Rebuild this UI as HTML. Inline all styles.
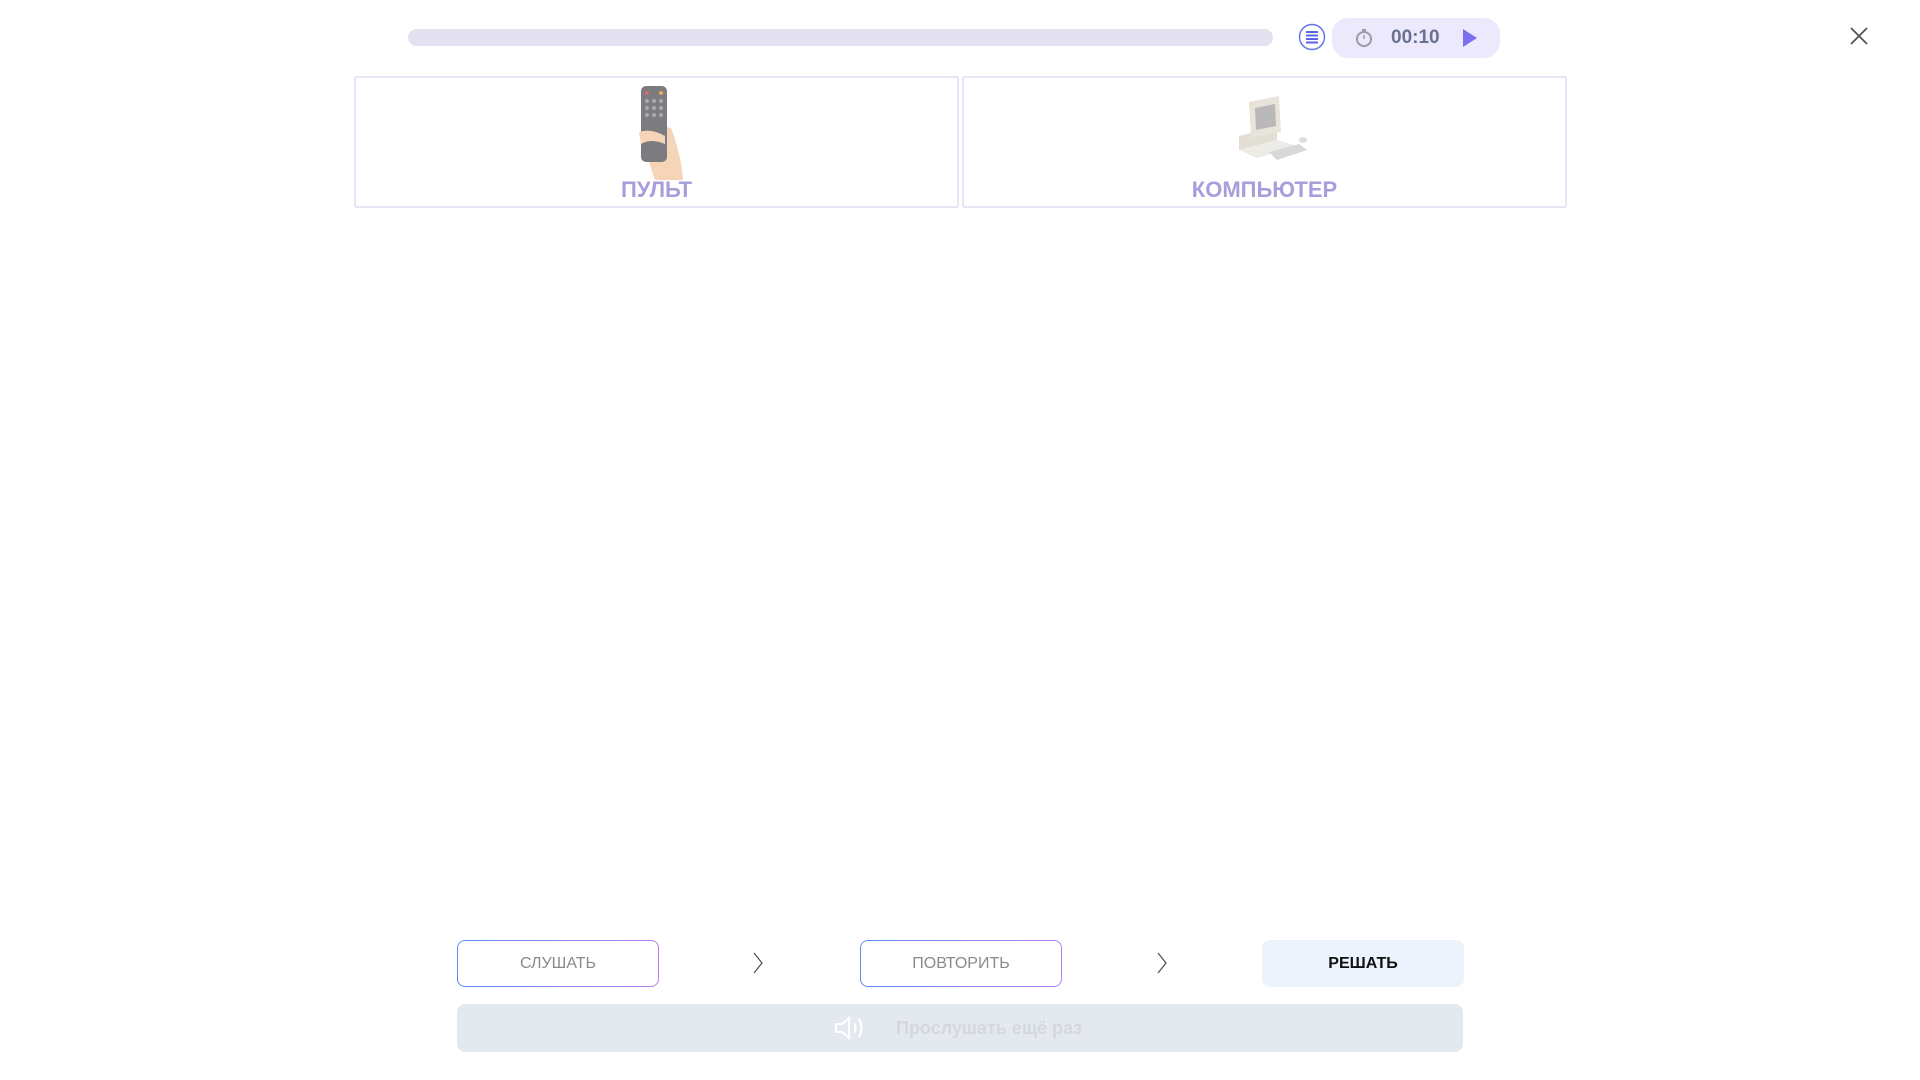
<!DOCTYPE html>
<html><head><meta charset="utf-8"><style>
*{margin:0;padding:0;box-sizing:border-box}
body{width:1920px;height:1080px;background:#fff;position:relative;overflow:hidden;font-family:"Liberation Sans",sans-serif}
.a{position:absolute}
.card{position:absolute;top:76px;height:132px;border:2px solid #e7e4f5;border-radius:3px;background:#fff}
.card .lbl{position:absolute;left:0;right:0;top:99px;text-align:center;font-weight:bold;font-size:22px;color:#a99ddb}
.btn{position:absolute;top:940px;height:47px;width:202px;border-radius:8px;display:flex;align-items:center;justify-content:center;font-size:16px;color:#8a8a8a}
.gb{border:1.5px solid transparent;background:linear-gradient(#fff,#fff) padding-box,linear-gradient(90deg,#5b8cf5,#b57ff0) border-box}
</style></head><body>
<div class="a" style="left:408px;top:29px;width:865px;height:17px;border-radius:9px;background:#e4e2f0"></div>
<svg class="a" style="left:1298px;top:23px" width="28" height="28" viewBox="0 0 28 28"><circle cx="14" cy="14" r="12.5" fill="#fff" stroke="#6a74f0" stroke-width="1.5"/><g stroke="#5a66e8" stroke-width="2"><line x1="8" y1="9" x2="20" y2="9"/><line x1="8" y1="12.5" x2="20" y2="12.5"/><line x1="8" y1="16" x2="20" y2="16"/><line x1="8" y1="19.5" x2="20" y2="19.5"/></g></svg>
<div class="a" style="left:1332px;top:18px;width:168px;height:40px;border-radius:16px;background:#ede9fd"></div>
<svg class="a" style="left:1354px;top:27px" width="20" height="22" viewBox="0 0 20 22"><circle cx="10" cy="12" r="7" fill="none" stroke="#9a9aa8" stroke-width="2"/><line x1="8" y1="3" x2="12" y2="3" stroke="#9a9aa8" stroke-width="2"/><line x1="10" y1="12" x2="10" y2="8" stroke="#9a9aa8" stroke-width="1.5"/></svg>
<div class="a" style="left:1391px;top:27px;font-size:19px;font-weight:bold;color:#6b7190">00:10</div>
<svg class="a" style="left:1462px;top:28px" width="16" height="20"><polygon points="1,1 15,10 1,19" fill="#7b6ef0"/></svg>
<svg class="a" style="left:1850px;top:27px" width="18" height="18"><path d="M1 1L17 17M17 1L1 17" stroke="#555" stroke-width="1.8"/></svg>

<div class="card" style="left:354px;width:605px">
 <svg class="a" style="left:275px;top:6px" width="56" height="96" viewBox="0 0 56 96"><path d="M20 40 Q8 44 12 54 Q6 60 14 66 L24 96 L52 96 Q50 70 40 44 Z" fill="#f6d4b8"/><rect x="10" y="2" width="26" height="76" rx="5" fill="#7c7c80"/><circle cx="16" cy="9" r="2" fill="#d86c6c"/><circle cx="30" cy="9" r="2" fill="#e2b24a"/><g fill="#a9a9ad"><circle cx="16" cy="17" r="2"/><circle cx="23" cy="17" r="2"/><circle cx="30" cy="17" r="2"/><circle cx="16" cy="24" r="2"/><circle cx="23" cy="24" r="2"/><circle cx="30" cy="24" r="2"/><circle cx="16" cy="31" r="2"/><circle cx="23" cy="31" r="2"/><circle cx="30" cy="31" r="2"/></g><path d="M8 48 Q20 44 34 52 L34 60 Q20 54 10 60 Z" fill="#f6d4b8"/></svg>
 <div class="lbl">ПУЛЬТ</div>
</div>
<div class="card" style="left:962px;width:605px">
 <svg class="a" style="left:261px;top:16px" width="86" height="74" viewBox="0 0 86 74"><path d="M14 42 L52 32 L52 46 L14 56 Z" fill="#e2ded4"/><path d="M14 56 L52 46 L72 52 L32 64 Z" fill="#ecebe6"/><path d="M24 8 L54 2 L56 38 L26 44 Z" fill="#e8e4da"/><path d="M30 14 L50 10 L51 32 L31 36 Z" fill="#b9b9b9"/><path d="M44 58 L74 50 L82 56 L52 66 Z" fill="#d8d8d8"/><ellipse cx="78" cy="46" rx="4" ry="3" fill="#ddd"/></svg>
 <div class="lbl">КОМПЬЮТЕР</div>
</div>

<div class="btn gb" style="left:457px">СЛУШАТЬ</div>
<svg class="a" style="left:752px;top:951px" width="12" height="24"><path d="M2 2L10 12L2 22" fill="none" stroke="#555" stroke-width="1.3"/></svg>
<div class="btn gb" style="left:860px">ПОВТОРИТЬ</div>
<svg class="a" style="left:1156px;top:951px" width="12" height="24"><path d="M2 2L10 12L2 22" fill="none" stroke="#555" stroke-width="1.3"/></svg>
<div class="btn" style="left:1262px;background:#edf3fd;color:#111;font-weight:bold">РЕШАТЬ</div>

<div class="a" style="left:457px;top:1004px;width:1006px;height:48px;border-radius:8px;background:#e4e8ef"></div>
<svg class="a" style="left:834px;top:1015px" width="32" height="26" viewBox="0 0 32 26"><path d="M2 9H8L15 3V23L8 17H2Z" fill="none" stroke="#fff" stroke-width="2"/><path d="M20 8Q23 13 20 18M25 4Q30 13 25 22" fill="none" stroke="#fff" stroke-width="2"/></svg>
<div class="a" style="left:896px;top:1018px;font-size:18px;font-weight:bold;color:#d3d7e0">Прослушать ещё раз</div>
</body></html>
